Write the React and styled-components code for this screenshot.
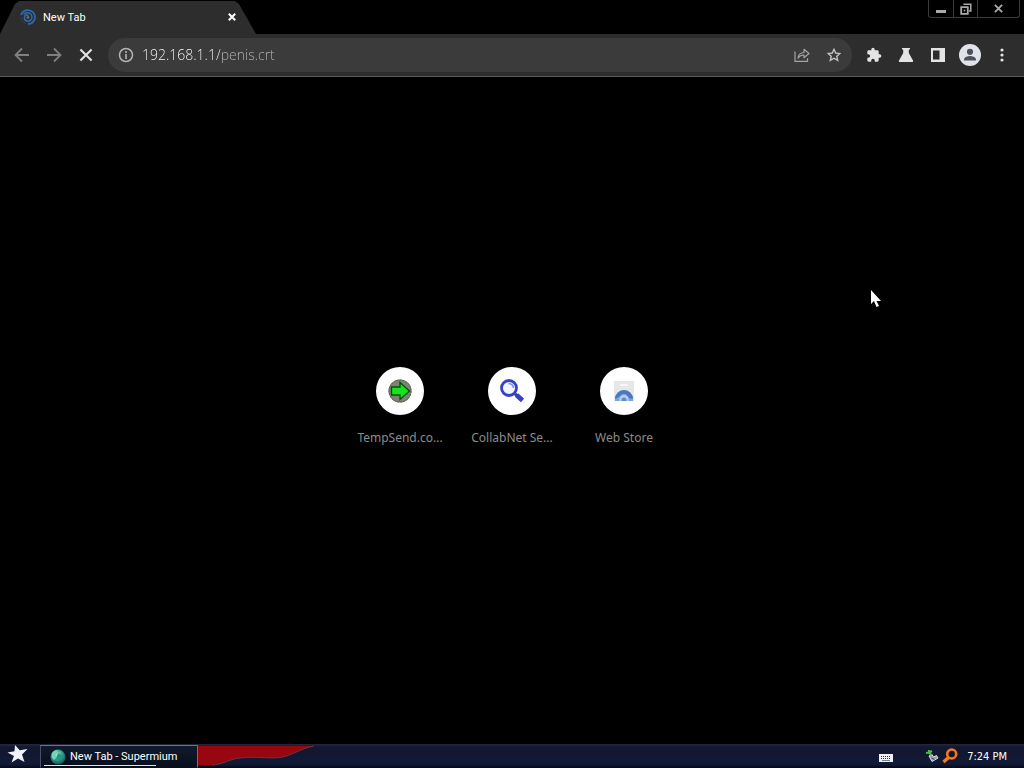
import styled, { createGlobalStyle } from "styled-components";

const GlobalStyle = createGlobalStyle`
    * {
        box-sizing: border-box;
    }
    body {
        margin: 0;
        background: #000;
        font-family: "DejaVu Sans Condensed", "DejaVu Sans", sans-serif;
        font-size: 11px;
        color: #fff;
    }
    button {
        font: inherit;
        color: inherit;
        background: none;
        border: 0;
        padding: 0;
    }
    svg {
        display: block;
        flex: none;
    }
`

const Page = styled.div`
    position: relative;
    min-height: 100vh;
    display: flex;
    flex-direction: column;
    overflow: hidden;
`

const TitleBar = styled.header`
    display: flex;
    justify-content: space-between;
    align-items: flex-start;
    height: 34px;
    padding-right: 4px;
`

const Tab = styled.div`
    display: flex;
    align-items: center;
    gap: 7px;
    width: 256px;
    height: 34px;
    padding: 0 16px 0 20px;
    background: #2d2d2d;
    clip-path: polygon(0 100%, 15px 4px, 19px 1px, 235px 1px, 239px 4px, 100% 100%);
    .tab-title {
        flex: 1;
        font-family: Roboto, "Noto Sans", sans-serif;
    }
`

const TabClose = styled.button`
    display: grid;
    place-items: center;
    width: 16px;
    height: 16px;
`

const WindowControls = styled.div`
    display: flex;
    height: 18px;
    border: 1px solid #3a3a3a;
    border-top: 0;
    border-radius: 0 0 3px 3px;
`

const WindowButton = styled.button`
    display: grid;
    place-items: center;
    width: ${({ $wide }) => ($wide ? "42px" : "24px")};
    color: #aaa;
    & + & {
        border-left: 1px solid #3a3a3a;
    }
`

const Toolbar = styled.nav`
    display: flex;
    align-items: center;
    gap: 8px;
    height: 43px;
    padding: 0 8px;
    background: #2d2d2d;
    border-bottom: 1px solid #5a5a5a;
`

const ButtonGroup = styled.div`
    display: flex;
    gap: 4px;
`

const IconButton = styled.button`
    display: grid;
    place-items: center;
    width: 28px;
    height: 28px;
    color: ${({ $color }) => $color || "#e4e4e4"};
`

const Omnibox = styled.div`
    flex: 1;
    display: flex;
    align-items: center;
    height: 34px;
    padding: 0 4px;
    border-radius: 17px;
    background: #3b3b3b;
`

/* the host is bright, the path behind it is dimmed */
const AddressInput = styled.input`
    flex: 1;
    min-width: 0;
    height: 24px;
    margin-left: 2px;
    padding: 0 0 2px;
    border: 0;
    outline: 0;
    font-family: "Open Sans", "Noto Sans", sans-serif;
    font-size: 14px;
    font-weight: 300;
    color: transparent;
    background: linear-gradient(to right, #fff 78px, #b4b4b4 78px);
    background-clip: text;
`

const Content = styled.main`
    flex: 1;
    display: flex;
    align-items: center;
    justify-content: center;
    padding-bottom: 9px;
`

const Shortcut = styled.a`
    display: flex;
    flex-direction: column;
    align-items: center;
    gap: 15px;
    width: 112px;
    color: #8c8c8c;
    font-family: "Noto Sans", sans-serif;
    font-size: 12px;
    line-height: 16px;
    text-decoration: none;
`

const ShortcutIcon = styled.span`
    display: grid;
    place-items: center;
    width: 48px;
    height: 48px;
    border-radius: 50%;
    background: #fff;
`

const Taskbar = styled.footer`
    display: flex;
    align-items: stretch;
    height: 24px;
    background: linear-gradient(#23283f 0, #131830 3px, #131830 10px, #101a38 20px, #050812 24px);
`

const StartButton = styled.button`
    display: grid;
    place-items: center;
    width: 40px;
    padding-right: 5px;
`

const TaskButton = styled.button`
    position: relative;
    display: flex;
    align-items: center;
    gap: 4px;
    width: 158px;
    margin-top: 1px;
    padding-left: 9px;
    background: linear-gradient(#111a2d, #080e1b);
    border: 1px solid #68738a;
    border-bottom-color: #080e1b;
    border-left-color: #46506a;
    font-family: Roboto, "Noto Sans", sans-serif;
    white-space: nowrap;
    &:after {
        content: "";
        position: absolute;
        left: 3px;
        right: 41px;
        bottom: 1px;
        height: 1px;
        background: #dce4ee;
    }
`

const Tray = styled.div`
    display: flex;
    align-items: center;
    margin-left: auto;
    padding-right: 17px;
    .keyboard {
        margin: 4px 32px 0 0;
    }
    .device {
        margin-right: 3px;
    }
    .clock {
        margin-left: 9px;
    }
`

const Pointer = styled.svg`
    position: absolute;
    left: 870px;
    top: 289px;
    pointer-events: none;
`

const SwirlIcon = () => (
    <svg width="16" height="16" viewBox="0 0 16 16" fill="none">
        <path d="M1 6C2 2 6 .5 9.500 1.300 13.500 2 15.500 6 14.800 9.500 14 13 11 15 8 15" stroke="#2868b4" strokeWidth="1.800" />
        <path d="M3.500 5.500C5.500 3 10 3 11.500 6c1.200 2.600 0 5.200-2.500 6-2.400.7-5-1-4.700-3.500C4.600 6.200 7 5.500 8.500 6.700" stroke="#346ba5" strokeWidth="1.500" />
        <path d="M1 8c0 3 2 5.500 4.500 6.300" stroke="#28456a" strokeWidth="1" />
        <circle cx="8" cy="8.500" r="1.400" fill="#5b7069" />
    </svg>
)

const CrossIcon = ({ size = 10, weight = 2 }) => (
    <svg width={size} height={size} viewBox="0 0 10 10" stroke="currentColor" strokeWidth={weight}>
        <path d="M1 1l8 8M9 1L1 9" />
    </svg>
)

const MinimizeIcon = () => (
    <svg width="12" height="12" viewBox="0 0 12 12">
        <path d="M1 7h10v3H1z" fill="currentColor" />
    </svg>
)

const RestoreIcon = () => (
    <svg width="12" height="12" viewBox="0 0 12 12" fill="none" stroke="currentColor">
        <path d="M3.500 1.200h7.300V8H9" strokeWidth="1.500" />
        <path d="M1.200 4.200h6.600v6.600H1.200z" strokeWidth="1.800" />
        <path d="M3.700 6.700h1.600v1.600H3.700z" fill="currentColor" stroke="none" />
    </svg>
)

const ArrowIcon = ({ forward }) => (
    <svg width="16" height="16" viewBox="0 0 16 16" fill="none" stroke="currentColor" strokeWidth="1.800">
        {forward
            ? <path d="M1 8h13M8 1.500L14.500 8 8 14.500" />
            : <path d="M15 8H2M8 1.500L1.500 8 8 14.500" />}
    </svg>
)

const InfoIcon = () => (
    <svg width="16" height="16" viewBox="0 0 16 16" fill="none" stroke="currentColor">
        <circle cx="8" cy="8" r="6.500" strokeWidth="1.500" />
        <path d="M8 7v5M8 4v2" strokeWidth="1.600" />
    </svg>
)

const ShareIcon = () => (
    <svg width="18" height="16" viewBox="0 0 18 16" fill="none" stroke="currentColor" strokeWidth="1.200">
        <path d="M2 4.500v9.900h12.500v-3.200" />
        <path d="M5 11.200c.4-3.700 2.500-5.600 6-5.700V2.300L16 6.500l-5 4.300V8C8.500 7.900 6.500 9 5 11.200z" strokeLinejoin="round" />
    </svg>
)

const StarIcon = () => (
    <svg width="16" height="16" viewBox="0 0 24 24" fill="currentColor">
        <path d="M23 9.100l-7.600-.7L12 1 8.600 8.400 1 9.100l5.700 5.200L5 22l7-4.100 7 4.100-1.700-7.700zM12 15.600L8 18l1-4.500L5.500 10.400l4.700-.4L12 5.600l1.800 4.400 4.700.4L15 13.500l1 4.500z" />
    </svg>
)

const PuzzleIcon = () => (
    <svg width="16" height="16" viewBox="0 0 24 24" fill="currentColor">
        <path d="M20.500 11H19V7c0-1.100-.9-2-2-2h-4V3.500a2.500 2.500 0 0 0-5 0V5H4c-1.100 0-2 .9-2 2v3.800h1.500a2.700 2.700 0 0 1 0 5.400H2V20c0 1.100.9 2 2 2h3.800v-1.500a2.700 2.700 0 0 1 5.400 0V22H17c1.100 0 2-.9 2-2v-4h1.500a2.500 2.500 0 0 0 0-5z" />
    </svg>
)

const FlaskIcon = () => (
    <svg width="16" height="16" viewBox="0 0 16 16" fill="currentColor">
        <path d="M4 1h8v1.500h-1.200V6l4.200 7.500c.5.900 0 1.500-1 1.500H2c-1 0-1.500-.6-1-1.500L5.200 6V2.500H4z" />
    </svg>
)

const SidePanelIcon = () => (
    <svg width="16" height="16" viewBox="0 0 16 16" fill="currentColor">
        <path d="M1 1h14v14H1zM3 3.500v9h6.500v-9z" fillRule="evenodd" />
    </svg>
)

const AvatarIcon = () => (
    <svg width="22" height="22" viewBox="0 0 22 22">
        <circle cx="11" cy="11" r="11" fill="#e0e3ea" />
        <circle cx="11" cy="7.800" r="3.100" fill="#4d525a" />
        <path d="M5 15.800c0-3 4-3.900 6-3.900s6 .9 6 3.900v.7H5z" fill="#4d525a" />
    </svg>
)

const DotsIcon = () => (
    <svg width="16" height="16" viewBox="0 0 16 16" fill="currentColor">
        <circle cx="8" cy="3" r="1.600" />
        <circle cx="8" cy="8" r="1.600" />
        <circle cx="8" cy="13" r="1.600" />
    </svg>
)

const GreenArrowIcon = () => (
    <svg width="24" height="24" viewBox="0 0 24 24">
        <circle cx="12" cy="12" r="11.500" fill="#7d8476" />
        <circle cx="12" cy="12" r="11" fill="none" stroke="#4e5849" strokeDasharray="2 1" />
        <path d="M3.500 8h8.500V3.500l9.500 8.500-9.500 8.500V16H3.500z" fill="#12e61a" stroke="#064d0a" strokeWidth="1.300" />
    </svg>
)

const MagnifierIcon = () => (
    <svg width="24" height="24" viewBox="0 0 24 24" fill="none">
        <circle cx="9" cy="9" r="7.500" fill="#f2f4ff" stroke="#3a40c6" strokeWidth="2.800" />
        <path d="M8.500 4.500c3 .1 4.700 1.700 4.900 4.500" stroke="#7c88df" strokeWidth="1.400" />
        <path d="M14 14l3.500 3" stroke="#3a40c6" strokeWidth="3" />
        <path d="M16.500 16l6 5.500" stroke="#3a40c6" strokeWidth="4.800" />
    </svg>
)

const WebStoreIcon = () => (
    <svg width="20" height="20" viewBox="0 0 20 20">
        <path d="M0 0h20v20H0z" fill="#e6e8e8" />
        <path d="M6 3h8v2H6z" fill="#f6f6f6" />
        <path d="M1 20v-2a9 9 0 0 1 18 0v2z" fill="#7ba4e1" />
        <path d="M1 18a9 9 0 0 1 18 0l-4-1-3-4H8l-3 3z" fill="#4c78bd" />
        <path d="M5.500 20v-1.500a4.500 4.500 0 0 1 9 0V20z" fill="#b5d0f4" />
        <path d="M7.500 20v-1a2.500 2.500 0 0 1 5 0v1z" fill="#618acb" />
    </svg>
)

const WhiteStarIcon = () => (
    <svg width="22" height="22" viewBox="0 2 22 22">
        <path d="M8 2l4.700 5.200L20.500 6l-5.500 5.500 2.500 7.500-6.500-3.500L4.500 19.500 7 13 .5 9.500l7-1.300z" fill="#f0f2fa" />
    </svg>
)

const GlobeIcon = () => (
    <svg width="16" height="16" viewBox="0 0 16 16">
        <defs>
            <radialGradient id="globe" cx=".45" cy=".35" r=".65">
                <stop offset="0" stopColor="#a6f4d8" />
                <stop offset=".5" stopColor="#34a18a" />
                <stop offset="1" stopColor="#10545a" />
            </radialGradient>
        </defs>
        <circle cx="8" cy="8" r="7.500" fill="url(#globe)" />
        <path d="M8 4l6 3.500-4 4.500-4-2z" fill="#27967f" />
        <path d="M2 4c2-2.500 4-3 6-2.500L5.500 5l1 3L4 11 1.500 8z" fill="#73d5b7" />
    </svg>
)

const RedWave = () => (
    <svg width="118" height="24" viewBox="0 0 118 24">
        <path d="M0 2h116C103 4 94 12 82 13.500c-13 1.500-24-1.500-40 .5-12 1.500-18 7-28 7H0z" fill="#98070f" />
        <path d="M116 2C103 4 94 12 82 13.500c-13 1.500-24-1.500-40 .5-12 1.500-18 7-28 7" fill="none" stroke="#69353f" />
    </svg>
)

const KeyboardIcon = () => (
    <svg className="keyboard" width="14" height="8" viewBox="0 0 14 8">
        <path d="M0 0h14v8H0z" fill="#eef0f4" />
        <path d="M2 2.500h10M2 4.500h10" stroke="#222b42" strokeDasharray="1 1" />
        <path d="M3 6.500h8" stroke="#788092" />
    </svg>
)

const DeviceIcon = () => (
    <svg className="device" width="14" height="14" viewBox="0 0 14 14" fill="none">
        <path d="M4 7l3 5.500 6-3.500-1.500-2.500-3 1.500L7 5.500z" fill="#9aa0b0" stroke="#d8dce8" />
        <path d="M6.500 9l3 1.500" stroke="#383f54" />
        <path d="M1 4l3-.5L6.500 6M4 1v3M4 3.500L7 2" stroke="#4dbb45" strokeWidth="2" />
    </svg>
)

const OrangeSearchIcon = () => (
    <svg width="16" height="16" viewBox="0 0 16 16" fill="none" stroke="#f27a1d">
        <circle cx="9.700" cy="6" r="4.500" strokeWidth="2.600" />
        <path d="M6.500 9.500L1.500 14" strokeWidth="3.400" />
    </svg>
)

const shortcuts = [
    { title: "TempSend.co...", Icon: GreenArrowIcon },
    { title: "CollabNet Se...", Icon: MagnifierIcon },
    { title: "Web Store", Icon: WebStoreIcon },
]

const App = () => {
    return <>
        <GlobalStyle />
        <Page>
            <TitleBar>
                <Tab>
                    <SwirlIcon />
                    <span className="tab-title">New Tab</span>
                    <TabClose aria-label="Close tab"><CrossIcon size={8} weight={2.500} /></TabClose>
                </Tab>
                <WindowControls>
                    <WindowButton aria-label="Minimize"><MinimizeIcon /></WindowButton>
                    <WindowButton aria-label="Restore"><RestoreIcon /></WindowButton>
                    <WindowButton $wide aria-label="Close"><CrossIcon size={9} /></WindowButton>
                </WindowControls>
            </TitleBar>
            <Toolbar>
                <ButtonGroup>
                    <IconButton $color="#808080" aria-label="Back"><ArrowIcon /></IconButton>
                    <IconButton $color="#808080" aria-label="Forward"><ArrowIcon forward /></IconButton>
                    <IconButton aria-label="Stop"><CrossIcon size={14} weight={1.500} /></IconButton>
                </ButtonGroup>
                <Omnibox>
                    <IconButton $color="#b4b4b4" aria-label="Site information"><InfoIcon /></IconButton>
                    <AddressInput aria-label="Address" defaultValue="192.168.1.1/penis.crt" spellCheck={false} />
                    <ButtonGroup>
                        <IconButton $color="#a4a4a4" aria-label="Share"><ShareIcon /></IconButton>
                        <IconButton $color="#c4c4c4" aria-label="Bookmark"><StarIcon /></IconButton>
                    </ButtonGroup>
                </Omnibox>
                <ButtonGroup>
                    <IconButton aria-label="Extensions"><PuzzleIcon /></IconButton>
                    <IconButton aria-label="Experiments"><FlaskIcon /></IconButton>
                    <IconButton aria-label="Side panel"><SidePanelIcon /></IconButton>
                    <IconButton aria-label="Profile"><AvatarIcon /></IconButton>
                    <IconButton aria-label="Menu"><DotsIcon /></IconButton>
                </ButtonGroup>
            </Toolbar>
            <Content>
                {shortcuts.map(({ title, Icon }) => (
                    <Shortcut key={title} href="#">
                        <ShortcutIcon><Icon /></ShortcutIcon>
                        <span>{title}</span>
                    </Shortcut>
                ))}
            </Content>
            <Taskbar>
                <StartButton aria-label="Start"><WhiteStarIcon /></StartButton>
                <TaskButton>
                    <GlobeIcon />
                    New Tab - Supermium
                </TaskButton>
                <RedWave />
                <Tray>
                    <KeyboardIcon />
                    <DeviceIcon />
                    <OrangeSearchIcon />
                    <span className="clock">7:24 PM</span>
                </Tray>
            </Taskbar>
            <Pointer width="12" height="19" viewBox="0 0 12 19">
                <path d="M1 1v14l3-3 2.500 6 2.500-1-2.500-5H11z" fill="#fff" />
            </Pointer>
        </Page>
    </>
}

export default App;
